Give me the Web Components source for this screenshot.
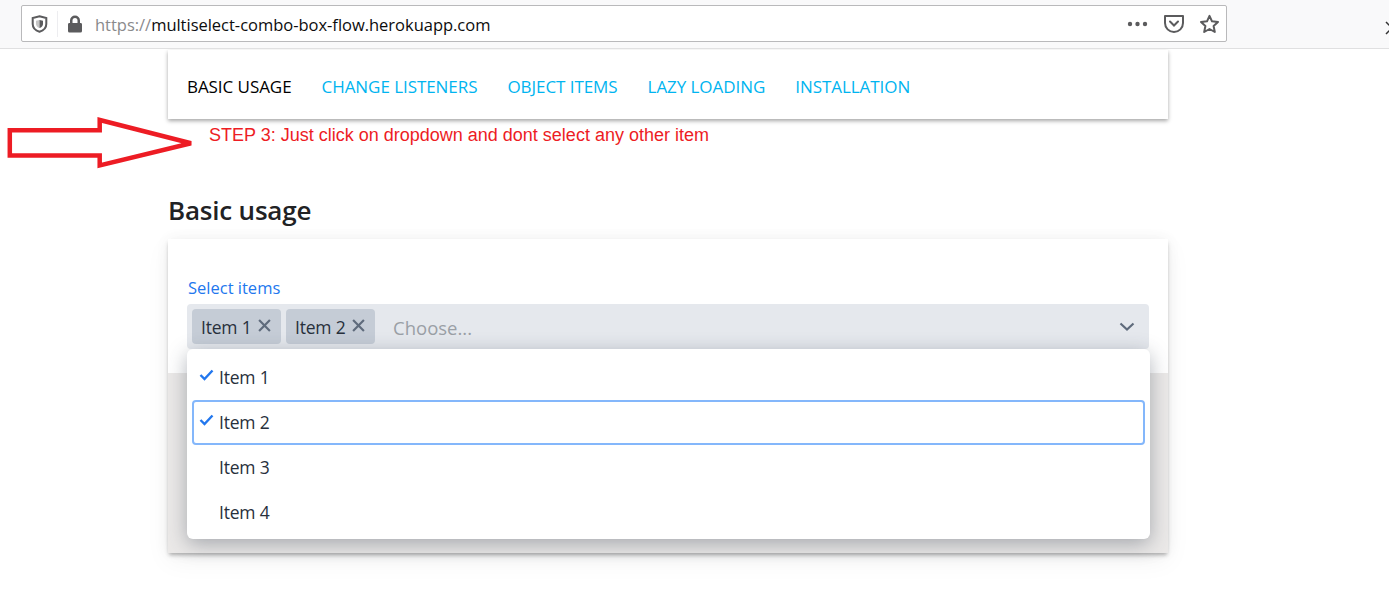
<!DOCTYPE html>
<html>
<head>
<meta charset="utf-8">
<title>multiselect-combo-box flow</title>
<style>
	html, body { margin: 0; padding: 0; background: #fff; }
	body { width: 1389px; height: 591px; overflow: hidden; font-family: "Open Sans", "Noto Sans", sans-serif; }
</style>
</head>
<body>
<browser-bar url-scheme="https://" url-host="multiselect-combo-box-flow.herokuapp.com"></browser-bar>
<demo-page>
	<demo-nav slot="nav">
		<nav-link active>BASIC USAGE</nav-link>
		<nav-link>CHANGE LISTENERS</nav-link>
		<nav-link>OBJECT ITEMS</nav-link>
		<nav-link>LAZY LOADING</nav-link>
		<nav-link>INSTALLATION</nav-link>
	</demo-nav>
	<step-note slot="note">STEP 3: Just click on dropdown and dont select any other item</step-note>
	<demo-card slot="card" heading="Basic usage">
		<multi-combo label="Select items" placeholder="Choose...">
			<combo-chip slot="chips">Item 1</combo-chip>
			<combo-chip slot="chips">Item 2</combo-chip>
			<combo-item slot="items" checked>Item 1</combo-item>
			<combo-item slot="items" checked focused>Item 2</combo-item>
			<combo-item slot="items">Item 3</combo-item>
			<combo-item slot="items">Item 4</combo-item>
		</multi-combo>
	</demo-card>
</demo-page>
<script>
;(function(customElements) {
	function define(name, html) {
		customElements.define(name, class extends HTMLElement {
			constructor() {
				super()
				this.attachShadow({ mode: 'open' })
			}
			connectedCallback() {
				let out = html
				for (let attr of this.getAttributeNames()) {
					out = out.split('{{' + attr + '}}').join(this.getAttribute(attr))
				}
				this.shadowRoot.innerHTML = out
			}
		})
	}

	define('browser-bar', `
		<style>
			:host { display: flex; align-items: flex-start; box-sizing: border-box; height: 49px; padding: 5px 0 0 21px; background: #f9f9fa; border-bottom: 1px solid #e0e0e1; position: relative; overflow: hidden; }
			.url { display: flex; align-items: center; box-sizing: border-box; width: 1206px; height: 37px; background: #fff; border: 1px solid #b9b9bb; border-radius: 2px; color: #5b5b5d; }
			.left { display: flex; align-items: center; width: 36px; height: 26px; justify-content: center; border-right: 1px solid #ededf0; margin-right: 8px; box-sizing: border-box; }
			.lock { margin-right: 12px; margin-left: 1px; }
			.text { flex: 1; padding-top: 1px; font: 16.5px "Open Sans", sans-serif; letter-spacing: -.02px; color: #0c0c0d; white-space: nowrap; }
			.text span { color: #8a8a8c; }
			.right { display: flex; align-items: center; gap: 14px; padding-right: 6px; }
			.cut { position: absolute; right: -6px; top: 21px; }
		</style>
		<div class="url">
			<div class="left">
				<svg width="17" height="18" viewBox="0 0 16 18"><path d="M8 1.200 14.800 3v6c0 3.800-3 6.600-6.800 7.800C4.200 15.600 1.200 12.800 1.200 9V3Z" fill="none" stroke="#5b5b5d" stroke-width="2"/><path d="M8 5 11.500 5.800V9c0 1.900-1.500 3.300-3.500 4.100Z" fill="#5b5b5d"/><path d="M8 5 4.500 5.800V9c0 1.900 1.500 3.300 3.500 4.100Z" fill="#5b5b5d" opacity=".35"/></svg>
			</div>
			<svg class="lock" width="16" height="18" viewBox="0 0 16 18"><path d="M3 8V5.500a5 5 0 0 1 10 0V8h1a1.500 1.500 0 0 1 1 1.500v6.500a1.500 1.500 0 0 1-1.500 1.500h-11A1.500 1.500 0 0 1 1 16V9.500A1.500 1.500 0 0 1 2 8Zm2.500 0h5V5.500a2.500 2.500 0 0 0-5 0Z" fill="#5b5b5d"/></svg>
			<div class="text"><span>{{url-scheme}}</span>{{url-host}}</div>
			<div class="right">
				<svg width="22" height="6" viewBox="0 0 22 6"><circle cx="3" cy="3" r="2.200" fill="#5b5b5d"/><circle cx="10.500" cy="3" r="2.200" fill="#5b5b5d"/><circle cx="18" cy="3" r="2.200" fill="#5b5b5d"/></svg>
				<svg width="22" height="20" viewBox="0 0 22 20"><path d="M2 2H20V9A9 9 0 0 1 2 9Z" fill="none" stroke="#5b5b5d" stroke-width="2" stroke-linejoin="round"/><path d="M7 7.500 11 11.500 15 7.500" fill="none" stroke="#5b5b5d" stroke-width="2" stroke-linecap="round"/></svg>
				<svg width="21" height="20" viewBox="0 0 21 20"><path d="M10.500 1.800 13 7.300 19 8 14.600 12 15.800 18 10.500 15 5.200 18 6.400 12 2 8 8 7.300Z" fill="none" stroke="#5b5b5d" stroke-width="2" stroke-linejoin="round"/></svg>
			</div>
		</div>
		<svg class="cut" width="10" height="14" viewBox="0 0 10 14"><path d="M1 1 9 9M1 13 9 5" stroke="#333" stroke-width="1.500" fill="none"/></svg>
	`)

	define('demo-page', `
		<style>
			:host { display: block; width: 1000px; margin-left: 168px; padding-top: 1px; }
		</style>
		<slot name="nav"></slot>
		<slot name="note"></slot>
		<slot name="card"></slot>
	`)

	define('demo-nav', `
		<style>
			:host { display: flex; gap: 30px; box-sizing: border-box; height: 69px; align-items: center; padding: 4px 19px 0; background: #fff; box-shadow: 0 2px 4px rgba(0,0,0,.35); }
		</style>
		<slot></slot>
	`)

	define('nav-link', `
		<style>
			:host { display: block; font: 17px "Open Sans", sans-serif; letter-spacing: -.06px; color: #00b4f0; white-space: nowrap; }
			:host([active]) { color: #000; }
		</style>
		<slot></slot>
	`)

	define('step-note', `
		<style>
			:host { display: flex; align-items: flex-start; height: 66px; position: relative; box-sizing: border-box; padding: 6px 0 0 41px; font: 18px "Liberation Sans", sans-serif; color: #ed1c24; white-space: nowrap; }
			svg { position: absolute; left: -168px; top: -9px; }
		</style>
		<svg width="200" height="60" viewBox="0 0 200 60"><path d="M9.800 20.300H99.700V10L191 33.300 99.700 55.500V45.500H9.800Z" fill="none" stroke="#ed1c24" stroke-width="4.500"/></svg>
		<slot></slot>
	`)

	define('demo-card', `
		<style>
			:host { display: block; }
			h2 { margin: 0; height: 54px; box-sizing: border-box; padding-top: 7px; font: 600 26px "Open Sans", sans-serif; letter-spacing: -.2px; color: #212224; }
			.box { height: 314px; box-sizing: border-box; padding: 37px 19px 0 19px; background: linear-gradient(#fff 0 134px, #ebe9e8 134px); box-shadow: 0 3px 4px -1px rgba(0,0,0,.3), 0 0 14px rgba(0,0,0,.05), 0 8px 24px rgba(0,0,0,.05); }
		</style>
		<h2>{{heading}}</h2>
		<div class="box"><slot></slot></div>
	`)

	define('multi-combo', `
		<style>
			:host { display: block; position: relative; width: 962px; }
			label { display: block; height: 28px; padding-left: 1px; font: 16.5px "Open Sans", sans-serif; color: #2277ee; }
			.field { display: flex; align-items: center; gap: 5px; box-sizing: border-box; height: 45px; padding: 0 14px 0 5px; background: #e5e8ed; border-radius: 4px; }
			.placeholder { flex: 1; margin-left: 13px; padding-top: 1px; font: 18.500px "Open Sans", sans-serif; color: #9a9fa6; }
			.menu { position: absolute; left: 0; top: 73px; width: 963px; height: 190px; box-sizing: border-box; padding: 6px 5px; background: #fff; border-radius: 6px; box-shadow: 0 5px 20px rgba(50,60,75,.38); }
		</style>
		<label>{{label}}</label>
		<div class="field">
			<slot name="chips"></slot>
			<div class="placeholder">{{placeholder}}</div>
			<svg width="16" height="10" viewBox="0 0 16 10"><path d="M1.500 1.500 8 7.500 14.500 1.500" fill="none" stroke="#5f6b7c" stroke-width="2.200"/></svg>
		</div>
		<div class="menu"><slot name="items"></slot></div>
	`)

	define('combo-chip', `
		<style>
			:host { display: flex; align-items: center; box-sizing: border-box; width: 89px; height: 35px; padding: 1px 0 0 9px; background: #c5ccd6; border-radius: 4px; font: 17.500px "Open Sans", sans-serif; letter-spacing: -.2px; color: #28303c; white-space: nowrap; }
			svg { margin-left: 6px; margin-top: -4px; }
		</style>
		<slot></slot>
		<svg width="13" height="13" viewBox="0 0 12 12"><path d="M1 1 11 11M11 1 1 11" stroke="#5f6b7c" stroke-width="2"/></svg>
	`)

	define('combo-item', `
		<style>
			:host { display: flex; align-items: center; box-sizing: border-box; height: 45px; padding: 0 0 1px 25px; position: relative; border-radius: 4px; font: 17.500px "Open Sans", sans-serif; letter-spacing: -.2px; color: #28303c; border: 2px solid transparent; }
			:host([focused]) { border-color: #84b7fb; }
			svg { display: none; position: absolute; left: 5px; top: 12px; }
			:host([checked]) svg { display: block; }
		</style>
		<svg width="15" height="12" viewBox="0 0 15 12"><path d="M1.500 6 5.500 10 13.500 1.500" fill="none" stroke="#2277ee" stroke-width="2.400"/></svg>
		<slot></slot>
	`)
})(customElements)
</script>
</body>
</html>
